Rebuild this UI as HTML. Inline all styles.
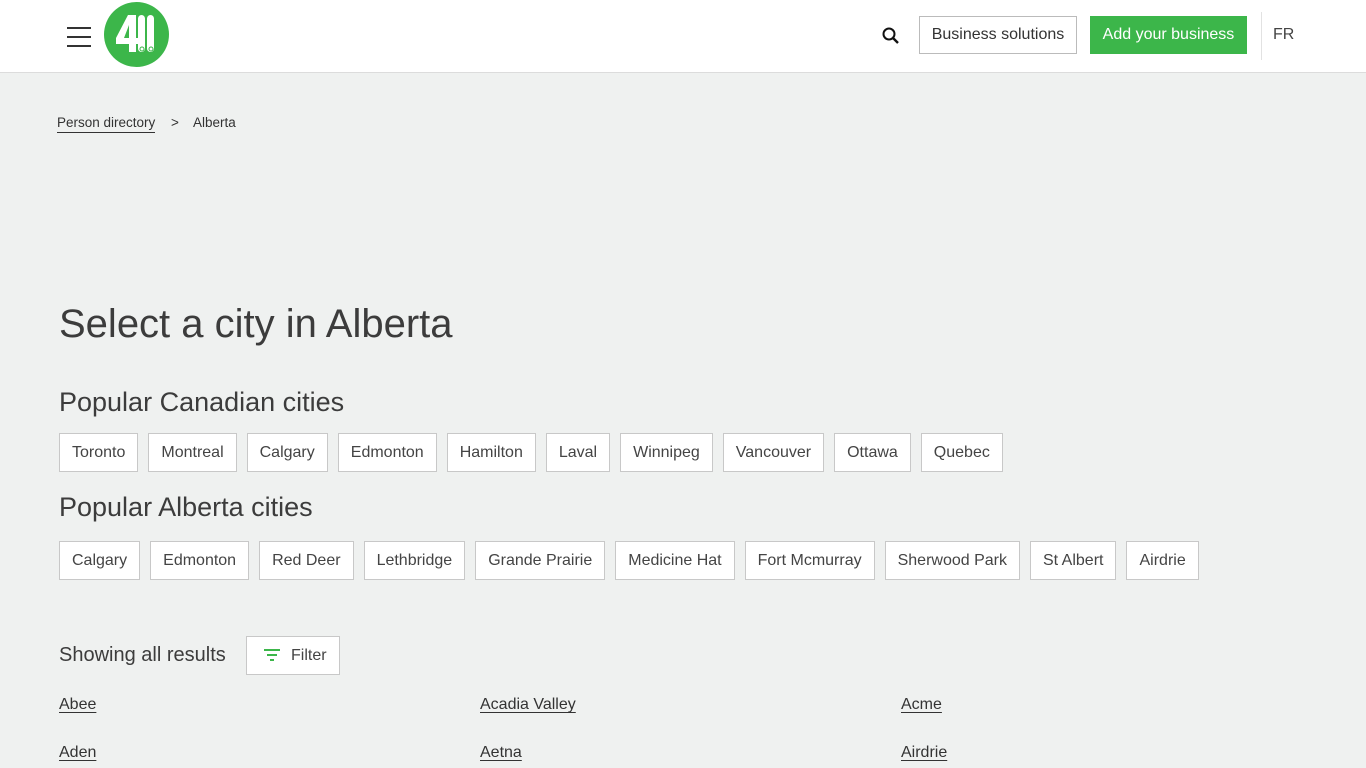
<!DOCTYPE html>
<html><head><meta charset="utf-8"><style>
*{margin:0;padding:0;box-sizing:border-box}
body{width:1366px;height:768px;overflow:hidden;background:#eff1f0;font-family:"Liberation Sans",Arial,sans-serif;color:#3c3c3c;position:relative}
.hdr{position:absolute;left:0;top:0;width:1366px;height:73px;background:#fff;border-bottom:1px solid #dcdcdc}
.burger{position:absolute;left:67px;top:27px;width:24px}
.burger i{display:block;height:2px;background:#333;margin-bottom:7px}
.logo{position:absolute;left:104px;top:2px;width:65px;height:65px;border-radius:50%;background:#3cb64a}
.btn1{position:absolute;left:919px;top:16px;width:158px;height:38px;border:1px solid #bbb;font-size:16px;line-height:36px;text-align:center;color:#333}
.btn2{position:absolute;left:1090px;top:16px;width:157px;height:38px;background:#3cb64a;color:#fff;font-size:16px;line-height:38px;text-align:center}
.sep{position:absolute;left:1261px;top:12px;width:1px;height:48px;background:#e2e2e2}
.fr{position:absolute;left:1273px;top:26px;font-size:16px;color:#444}
.bc{position:absolute;top:115px;font-size:13.5px;color:#333}
h1{position:absolute;left:59px;top:302px;font-size:40px;font-weight:normal;color:#3c3c3c}
h2{position:absolute;left:59px;font-size:27px;font-weight:normal;color:#3c3c3c}
.chips{position:absolute;left:59px;display:flex;gap:10px}
.chips span{display:block;height:39px;border:1px solid #c8c8c8;background:#fff;font-size:16px;line-height:37px;padding:0 12px;color:#444}
.lnk{position:absolute;font-size:16px;color:#333;text-decoration:underline;text-underline-offset:3px}
</style></head><body>
<div class="hdr">
<div class="burger"><i></i><i></i><i></i></div>
<div class="logo"><svg width="65" height="65" viewBox="0 0 65 65">
<path d="M12 36 L24 13 h8 v23 h3 v6 h-3 v8 h-7 v-8 H12z M20 36h5V23z" fill="#fff"/>
<rect x="34" y="13" width="7" height="37" rx="3.5" fill="#fff"/><rect x="43" y="13" width="7" height="37" rx="3.5" fill="#fff"/>
<circle cx="30" cy="47" r="1.8" fill="#fff"/><circle cx="38" cy="47" r="2" fill="none" stroke="#3cb64a" stroke-width="1"/><circle cx="47" cy="47" r="2" fill="none" stroke="#3cb64a" stroke-width="1"/></svg></div>
<svg style="position:absolute;left:881px;top:26px" width="20" height="20" viewBox="0 0 20 20"><circle cx="8" cy="8" r="5.5" fill="none" stroke="#111" stroke-width="2"/><path d="M12 12l5 5" stroke="#111" stroke-width="2.4"/></svg>
<div class="btn1">Business solutions</div>
<div class="btn2">Add your business</div>
<div class="sep"></div>
<div class="fr">FR</div>
</div>
<div class="bc" style="left:57px;border-bottom:1px solid #333;padding-bottom:2px">Person directory</div>
<div class="bc" style="left:171px">&gt;</div>
<div class="bc" style="left:193px">Alberta</div>
<h1>Select a city in Alberta</h1>
<h2 style="top:387px">Popular Canadian cities</h2>
<div class="chips" style="top:433px"><span>Toronto</span><span>Montreal</span><span>Calgary</span><span>Edmonton</span><span>Hamilton</span><span>Laval</span><span>Winnipeg</span><span>Vancouver</span><span>Ottawa</span><span>Quebec</span></div>
<h2 style="top:492px">Popular Alberta cities</h2>
<div class="chips" style="top:541px"><span>Calgary</span><span>Edmonton</span><span>Red Deer</span><span>Lethbridge</span><span>Grande Prairie</span><span>Medicine Hat</span><span>Fort Mcmurray</span><span>Sherwood Park</span><span>St Albert</span><span>Airdrie</span></div>
<div style="position:absolute;left:59px;top:644px;font-size:20px;color:#3c3c3c">Showing all results</div>
<div style="position:absolute;left:246px;top:636px;width:94px;height:39px;border:1px solid #c8c8c8;background:#fff;font-size:16px;line-height:37px;padding-left:44px;color:#444">Filter
<svg style="position:absolute;left:16px;top:11px" width="18" height="14"><path d="M1 2h16M4 7h10M7 12h4" stroke="#3cb64a" stroke-width="2"/></svg></div>
<div class="lnk" style="left:59px;top:696px">Abee</div>
<div class="lnk" style="left:480px;top:696px">Acadia Valley</div>
<div class="lnk" style="left:901px;top:696px">Acme</div>
<div class="lnk" style="left:59px;top:744px">Aden</div>
<div class="lnk" style="left:480px;top:744px">Aetna</div>
<div class="lnk" style="left:901px;top:744px">Airdrie</div>
</body></html>
